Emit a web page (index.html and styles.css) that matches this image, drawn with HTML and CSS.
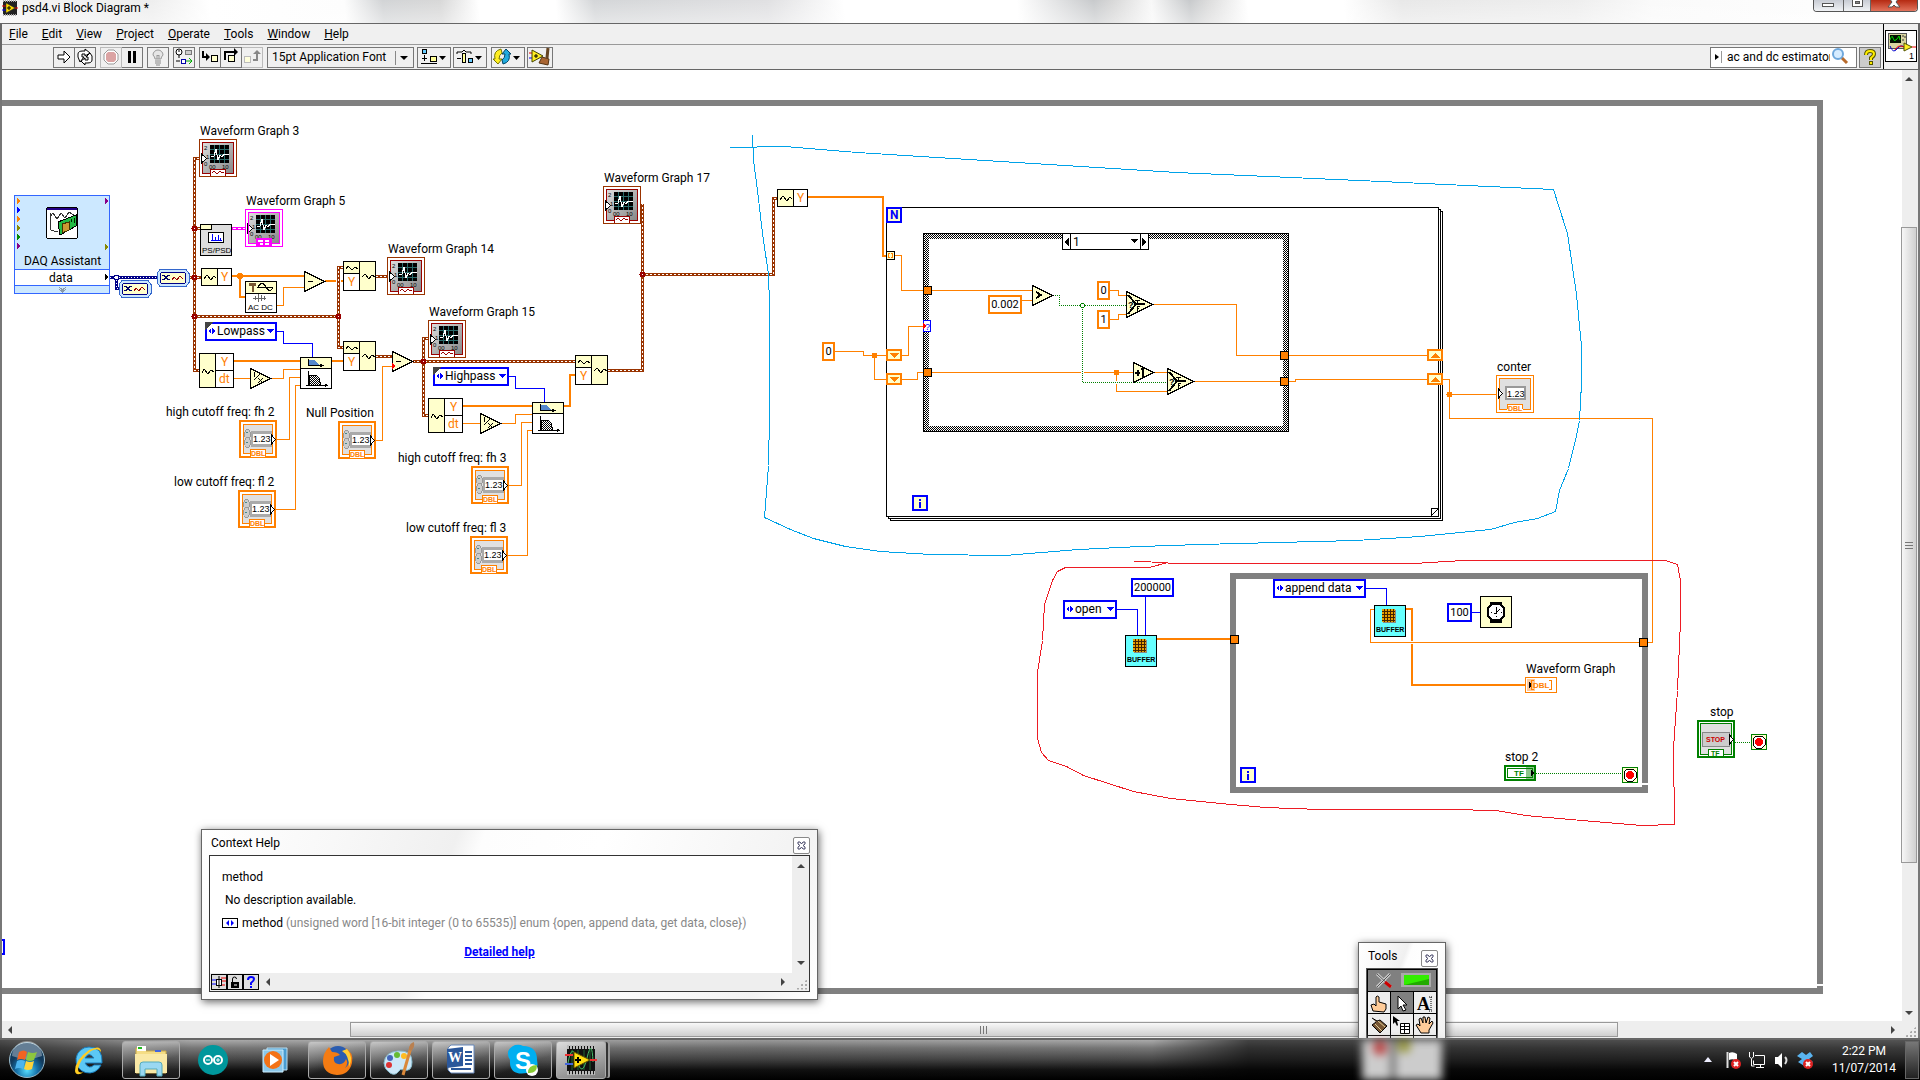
FILE: index.html
```html
<!DOCTYPE html>
<html lang="en">
<head>
<meta charset="utf-8">
<title>psd4.vi Block Diagram *</title>
<link rel="stylesheet" href="styles.css">
</head>
<body>
<div class="window">
  <header class="titlebar">
    <svg class="app-icon" width="16" height="16" viewBox="0 0 16 16"><rect x="1" y="1" width="14" height="14" fill="#222"/><path d="M1 1h14M1 15h14" stroke="#aaa" stroke-width="2" stroke-dasharray="1 1"/><path d="M0 6h4" stroke="#e00"/><path d="M0 10h4" stroke="#00f"/><path d="M4 3l9 5-9 5z" fill="#fd0" stroke="#333" stroke-width=".5"/><path d="M13 8h3" stroke="#e00"/><path d="M5 8h4M7 6v4" stroke="#000"/></svg>
    <span>psd4.vi Block Diagram *</span>
    <div class="caption-buttons">
      <button class="cap" aria-label="Minimize"><svg width="29" height="12"><rect x="8.500" y="3.500" width="11" height="3" fill="#fff" stroke="#555"/></svg></button>
      <button class="cap" aria-label="Restore"><svg width="26" height="12"><rect x="8.500" y="-2.500" width="10" height="9" fill="#fff" stroke="#555"/><rect x="11.500" y="1.500" width="4" height="2" fill="#888" stroke="#555"/></svg></button>
      <button class="cap cap-close" aria-label="Close"><svg width="46" height="12"><path d="M17 7h4l2-2 2 2h4l-4-5 3-4H18l3 4z" fill="#fff" stroke="#555"/></svg></button>
    </div>
  </header>

  <div class="bars">
    <div class="bars-main">
      <nav class="menubar">
        <button><u>F</u>ile</button><button><u>E</u>dit</button><button><u>V</u>iew</button><button><u>P</u>roject</button><button><u>O</u>perate</button><button><u>T</u>ools</button><button><u>W</u>indow</button><button><u>H</u>elp</button>
      </nav>
      <div class="toolbar">
        <div class="group">
          <button class="tb" aria-label="Run"><svg width="20" height="20"><path d="M4 8h6V4l6 6-6 6v-4H4z" fill="#fff" stroke="#000"/></svg></button>
          <button class="tb" aria-label="Run continuously"><svg width="20" height="20" fill="#fff" stroke="#000"><path d="M3 10V7q0-3 5-3h2V2l5 4-5 3V7H7v3h2l-4 5z"/><path d="M17 9v4q0 3-5 3h-2v2l-4-4 4-3v2h3v-3h-2l4-4z"/></svg></button>
        </div>
        <div class="group">
          <button class="tb dim" aria-label="Abort"><svg width="20" height="20"><path d="M7 3h6l4 4v6l-4 4H7l-4-4V7z" fill="#fff" stroke="#999"/><path d="M7 5h6l2 2v6l-2 2H7l-2-2V7z" fill="#dba3a3"/></svg></button>
          <button class="tb" aria-label="Pause"><svg width="20" height="20"><path d="M6 4h3v12H6zM11 4h3v12h-3z"/></svg></button>
        </div>
        <button class="tb" aria-label="Highlight execution"><svg width="20" height="20"><path d="M7 12q0-2-2-4a5 5 0 1 1 10 0q-2 2-2 4z" fill="#e6e6e6" stroke="#999"/><path d="M7 14h6M7 16h6M8 18h4" stroke="#888"/><path d="M9 12V8l1 1 1-1v4" fill="none" stroke="#999"/></svg></button>
        <button class="tb" aria-label="Retain wire values"><svg width="20" height="20"><circle cx="5" cy="5" r="3" fill="#fff" stroke="#000"/><path d="M5 5V3M5 8v3M2 14h4" stroke="#000"/><rect x="11.500" y="3.500" width="6" height="4" fill="#ccc" stroke="#777"/><rect x="7.500" y="12.500" width="4" height="4" fill="#fff" stroke="#00a"/><path d="M12 14h6l-3-3M18 14l-3 3" stroke="#0a0" fill="none"/></svg></button>
        <div class="group">
          <button class="tb" aria-label="Step into"><svg width="20" height="20"><path d="M3 4v6h4" fill="none" stroke="#000" stroke-width="2"/><path d="M6 6l4 4-4 4z"/><rect x="11.500" y="8.500" width="6" height="6" fill="#ffc" stroke="#000"/></svg></button>
          <button class="tb" aria-label="Step over"><svg width="20" height="20"><path d="M4 13V5h9" fill="none" stroke="#000" stroke-width="2"/><path d="M13 1l4 4-4 4z"/><rect x="7.500" y="8.500" width="6" height="6" fill="#ffc" stroke="#000"/></svg></button>
          <button class="tb dim" aria-label="Step out"><svg width="20" height="20"><path d="M11 13h4V6" fill="none" stroke="#888" stroke-width="2"/><path d="M11 7l4-4 4 4z" fill="#888"/><rect x="2.500" y="9.500" width="6" height="6" fill="#ffd" stroke="#bbb"/></svg></button>
        </div>
        <div class="font-box">
          <select aria-label="Font"><option>15pt Application Font</option></select>
          <span class="font-arrow" aria-hidden="true"></span>
        </div>
        <div class="menus">
          <button class="tb drop" aria-label="Align objects"><svg width="32" height="20"><rect x="4.500" y="2.500" width="4" height="4" fill="#6cf" stroke="#000"/><rect x="12.500" y="9.500" width="6" height="5" fill="#ff9" stroke="#000"/><path d="M6.500 8v6M4 11.500h5M3 16.500h16" stroke="#000"/><path d="M21 9h7l-3.500 4z"/></svg></button>
          <button class="tb drop" aria-label="Distribute objects"><svg width="32" height="20"><path d="M3 7V5h5l2-2 2 2h5v2M3 11.500h4" stroke="#000" fill="none"/><rect x="8.500" y="6.500" width="3" height="9" fill="#ff9" stroke="#000"/><rect x="14.500" y="11.500" width="4" height="4" fill="#6cf" stroke="#000"/><path d="M21 9h7l-3.500 4z"/></svg></button>
        </div>
        <button class="tb drop" aria-label="Reorder"><svg width="32" height="20"><path d="M9 2q-8 2-6 10H1l5 5 4-5H7q0-4 3-6z" fill="#fe2" stroke="#770"/><path d="M11 17q8-2 6-10h2l-5-5-4 5h3q0 4-3 6z" fill="#2ad" stroke="#046"/><path d="M21 9h7l-3.500 4z"/></svg></button>
        <button class="tb clean" aria-label="Clean up diagram"><svg width="24" height="20"><path d="M1 6h4" stroke="#e00"/><path d="M1 11h4" stroke="#00f"/><path d="M4 3l11 6-11 6z" fill="#fe2" stroke="#440"/><path d="M6 9h4M8 7v4" stroke="#000"/><path d="M20 1l-1 10" stroke="#642" stroke-width="3"/><path d="M14 10l7 2-1 6-9-2z" fill="#a63" stroke="#531"/></svg></button>
        <label class="search">
          <svg width="14" height="20"><path d="M4 7l4 3-4 3z"/><path d="M10.500 4v12" stroke="#999"/></svg>
          <input value="ac and dc estimator" aria-label="Search">
          <svg width="26" height="20"><path d="M11 10l6 6" stroke="#b86b2c" stroke-width="3"/><circle cx="8" cy="7" r="5" fill="#d6ecff" stroke="#6fa8dc" stroke-width="2"/></svg>
        </label>
        <button class="tb help" aria-label="Context help"><svg width="20" height="20"><path d="M6 8q0-4 4-4t4 3q0 2-3 4v2M11 14v4" fill="none" stroke="#550" stroke-width="4"/><path d="M6 8q0-4 4-4t4 3q0 2-3 4v2M11 15v2" fill="none" stroke="#fe0" stroke-width="2"/></svg></button>
      </div>
    </div>
    <div class="vi-icon">
      <svg width="32" height="32"><rect x=".5" y=".5" width="31" height="31" fill="#fff" stroke="#000"/><rect x="3.500" y="3.500" width="18" height="15" fill="#d8d4a0" stroke="#555"/><rect x="5" y="5" width="11" height="8" fill="#010"/><path d="M5 10q2-6 3-2t3 2 3-4l1 4" fill="none" stroke="#0d0"/><path d="M18 5v2M18 9v2M20 6v2" stroke="#333"/><path d="M5 16q3 8 7 3t7-2" fill="none" stroke="#00c"/><path d="M10 20q3-6 9-3M27 17h4" fill="none" stroke="#e00"/><path d="M19 13l8 4-8 4z" fill="#fe2" stroke="#550"/><text x="24" y="29" class="t9">1</text></svg>
    </div>
  </div>

  <main class="workspace">
    <svg class="diagram" width="1900" height="951" viewBox="2 70 1900 951">
      <defs>
        <pattern id="hatch" width="4" height="4" patternUnits="userSpaceOnUse"><rect width="4" height="4" fill="#fff"/><path d="M0 0h1v1H0zM1 1h1v1H1zM2 0h1v1H2zM3 1h1v1H3zM0 2h1v1H0zM2 2h1v1H2zM1 3h1v1H1zM3 3h1v1H3z"/></pattern>
        <linearGradient id="metal" x1="0" y1="0" x2="1" y2="1"><stop offset="0" stop-color="#ddd"/><stop offset="1" stop-color="#888"/></linearGradient>
        <g id="graph-face">
          <rect x="4" y="4" width="30" height="30" fill="url(#metal)"/>
          <rect x="11" y="6" width="19" height="18" fill="#000"/>
          <path d="M15.500 6v18M20.500 6v18M25.500 6v18M11 10.500h19M11 15.500h19M11 20.500h19" stroke="#2a6a6a"/>
          <path d="M12 17h3l2-7 2 11 2-5 2 2 2-3h5" fill="none" stroke="#fff"/>
          <text x="5" y="11" class="t6">2</text><text x="7" y="20" class="t6">1</text><text x="5" y="27" class="t6">0</text><text x="10" y="30" class="t6">00</text><text x="23" y="30" class="t6">10</text>
          <path d="M2.500 15v9l5-4.500z" fill="#fff" stroke="#000"/>
        </g>
        <g id="graph">
          <rect x=".5" y=".5" width="37" height="37" fill="#fff" stroke="#930"/>
          <use href="#graph-face"/>
          <rect x="3.500" y="3.500" width="31" height="31" fill="none" stroke="#900"/>
          <path d="M11.500 37v-7h15v7" fill="#fff" stroke="#900"/><path d="M13 34l2-2 3 3 3-3 2 2 2-1" fill="none" stroke="#900"/>
          <path d="M2.500 15v9l5-4.500z" fill="#fff" stroke="#000"/>
        </g>
        <g id="control">
          <rect x="1" y="1" width="36" height="36" fill="#fff" stroke="#ff8000" stroke-width="2"/>
          <rect x="4.500" y="4.500" width="29" height="29" fill="#e0e0e0" stroke="#ff8000"/>
          <rect x="12" y="11" width="21" height="16" fill="#aaa"/><ellipse cx="8.500" cy="14.500" rx="3" ry="5" fill="#ccc" stroke="#999"/><ellipse cx="8.500" cy="22.500" rx="3" ry="5" fill="#ccc" stroke="#999"/>
          <path d="M7 13l1-1 1 1M7 22l1 1 1-1" fill="none" stroke="#488"/>
          <rect x="14" y="14" width="18" height="10" fill="#fff"/><text x="14" y="22" class="t9">1.23</text>
          <path d="M32.500 15v9l4-4.500z" fill="#fff" stroke="#000"/>
          <rect x="11.500" y="29.500" width="15" height="8" fill="#fff" stroke="#ff8000"/><text x="12" y="36" class="t7 o b">DBL</text>
        </g>
        <g id="wavey"><rect x=".5" y=".5" width="30" height="17" fill="#fff" stroke="#000"/><rect x="1" y="1" width="15" height="16" fill="#ffc"/><path d="M16.500 0v18" stroke="#000"/><path d="M3 11l3-4 4 5 3-4 2 2" fill="none" stroke="#000"/><text x="20" y="13" class="t12 o">Y</text></g>
        <g id="build"><rect x=".5" y=".5" width="32" height="29" fill="#ffc" stroke="#000"/><rect x="1" y="13" width="15" height="16" fill="#fff"/><path d="M16.500 0v30M0 12.500h16" stroke="#000"/><path d="M3 8l2-3 4 4 3-3 3 2M19 16l3-3 4 5 3-4 3 2" fill="none" stroke="#000"/><text x="5" y="25" class="t12 o">Y</text></g>
        <g id="ydt"><rect x=".5" y=".5" width="34" height="34" fill="#fff" stroke="#000"/><rect x="1" y="1" width="15" height="33" fill="#ffc"/><path d="M16.500 0v35M16 17.500h18" stroke="#000"/><path d="M3 20l2-4 4 5 3-4 3 2" fill="none" stroke="#000"/><text x="22" y="13" class="t12 o">Y</text><text x="20" y="30" class="t12 o">dt</text></g>
        <g id="filter"><rect x=".5" y=".5" width="31" height="31" fill="#fff" stroke="#000"/><rect x="1" y="1" width="30" height="10" fill="#ffc"/><path d="M0 11.500h32M8.500 2v7M8 8.500h14M20 7l3 1.500-3 1.500M8.500 14v15M6 28.500h22M25 27l2 1.500-2 1.500" stroke="#000" fill="none"/><path d="M9 3h5l5 5H9z" fill="#58c"/><path d="M9 18h7l3 3 2 7H9z" fill="url(#hatch)" stroke="#000"/></g>
        <g id="recip"><path d="M.5 .5v20l20-10z" fill="#ffc" stroke="#000"/><path d="M4 12L10 6M4.500 4v5M8 10l5 5M13 10l-5 5" stroke="#000" fill="none"/></g>
        <g id="minus"><path d="M.5 .5v20l20-10z" fill="#ffc" stroke="#000"/><path d="M4 10.500h5" stroke="#000"/></g>
        <g id="select"><path d="M.5 .5v26l26-13z" fill="#ffc" stroke="#000"/><path d="M2 4l8 9-8 10M10 13h9" fill="none" stroke="#000" stroke-width="2"/><path d="M9 9.500h5M11.500 9v3M11.500 15v5M11 15.500h3M11 17.500h2" stroke="#000"/><text x="2" y="17" class="t9 b">?</text></g>
        <g id="buffer"><rect x=".5" y=".5" width="31" height="31" fill="#6ff" stroke="#000"/><rect x="9" y="5" width="13" height="13" fill="#888"/><rect x="8" y="4" width="13" height="13" fill="#e8a000"/><path d="M8 6.500h13M8 9.500h13M8 12.500h13M8 15.500h13M10.500 4v13M13.500 4v13M16.500 4v13M19.500 4v13" stroke="#420"/><text x="2" y="27" class="t7 b">BUFFER</text></g>
        <g id="tunnel"><rect x=".5" y=".5" width="8" height="8" fill="#ff8000" stroke="#000"/></g>
        <g id="shift"><rect x="1" y="1" width="14" height="10" fill="#ffc" stroke="#ff8000" stroke-width="2"/></g>
        <g id="iter"><rect x="1" y="1" width="14" height="14" fill="#ffc" stroke="#00f" stroke-width="2"/><path d="M7 4h2v2H7zM7 7h2v6H7z" fill="#00f"/></g>
        <g id="stopterm"><rect x=".5" y=".5" width="15" height="15" fill="#ffc" stroke="#008000"/><path d="M5 2h6l3 3v6l-3 3H5l-3-3V5z" fill="#fff" stroke="#000"/><circle cx="8" cy="8" r="4" fill="#f00"/></g>
        <g id="convert"><path d="M3 .5h26l3 4v9l-3 4H3l-3-4v-9z" fill="#cce8ff" stroke="#36c"/><rect x="3.500" y="3.500" width="25" height="11" rx="2" fill="#ffc" stroke="#008"/><path d="M5 6.500h2l4 4h2M5 10.500h2l4-4h2" fill="none" stroke="#006"/><path d="M15 11l2-3 3 3 3-4 3 3" fill="none" stroke="#900"/></g>
        <g id="enumglyph"><path d="M0 4l3-3v6zM4 1l3 3-3 3z" fill="#00f"/></g>
        <g id="caret"><path d="M0 0h7L3.500 4z" fill="#00f"/></g>
      </defs>

      <!-- outer while loop -->
      <path class="loop" d="M2 103H1820V984M1817 991H2"/><path d="M1817 986h6v8h-6z" fill="#808080"/>
      <path d="M0 940h4v14H0" fill="none" stroke="#00f" stroke-width="2"/>

      <!-- inner while loop -->
      <path class="loop" d="M1645 783V576H1233V790H1648"/><path d="M1642 785h6v3h-6z" fill="#808080"/>

      <!-- for loop -->
      <g fill="#fff" stroke="#000"><rect x="890.500" y="211.500" width="552" height="309"/><rect x="888.500" y="209.500" width="552" height="309"/><rect x="886.500" y="207.500" width="552" height="309"/><path d="M1431.500 516v-7.500h7M1431 516l8-8" fill="none"/></g>
      <path fill-rule="evenodd" d="M923 233h366v199h-366zM929 239v187h354v-187z" fill="url(#hatch)"/><rect x="923.500" y="233.500" width="365" height="198" fill="none" stroke="#000"/>

      <!-- waveform wires -->
      <path class="wf" d="M199 158.500H194.500V370.500H199M189 277.500H201M194 228.500H200M194 316.500H338.500M343 267.500H338.500V347.500H343M376 276.500H388M376 356.500H392M413 361.500H575M428 338.500H423.500V415.500H429M608 370.500H642.500V204M642 274.500H773.500V198.500H777"/>
      <path class="wf-core" d="M199 158.500H194.500V370.500H199M189 277.500H201M194 228.500H200M194 316.500H338.500M343 267.500H338.500V347.500H343M376 276.500H388M376 356.500H392M413 361.500H575M428 338.500H423.500V415.500H429M608 370.500H642.500V204M642 274.500H773.500V198.500H777"/>
      <g fill="#fff" stroke="#900" stroke-width="2"><circle cx="194.500" cy="228.500" r="2"/><circle cx="194.500" cy="277.500" r="2"/><circle cx="194.500" cy="316.500" r="2"/><circle cx="338.500" cy="316.500" r="2"/><circle cx="423.500" cy="361.500" r="2"/><circle cx="642.500" cy="274.500" r="2"/></g>
      <path d="M110 277.500H158M116.500 277V288.500H120" fill="none" stroke="#008" stroke-width="3"/><path d="M110 277.500H158M116.500 277V288.500H120" fill="none" stroke="#fff" stroke-dasharray="1 2"/><circle cx="116.500" cy="277.500" r="2.500" fill="#fff" stroke="#008"/>
      <path d="M232 228.500h14" stroke="#f0f" stroke-width="3"/><path d="M233 228.500h12" stroke="#fff" stroke-dasharray="3 2"/>

      <!-- numeric wires -->
      <path class="num2" d="M232 276H304M240 276V297H245M325 281H336M341 281H343M234 361H300M332 361H343M463 406H532M564 406H570V375H575M808 197H883V256H887M1157 639H1231M1406 609H1412V641M1412 644V685H1526"/>
      <path class="num" d="M277 305.500H283.500V287.500H304M234 378.500H250M271 378.500H283.500V369.500H300M277 439.500H289.500V377.500H300M276 509.500H295.500V385.500H300M376 440.500H382.500V366.500H392M463 423.500H480M501 423.500H515.500V414.500H532M509 485.500H521.500V422.500H532M508 555.500H527.500V430.500H532M835 351.500H863.500V355.500H886M874.500 355V379.500H886M895 255.500H901.500V290.500H924M902 355.500H908.500V326.500H924M902 379.500H917.500V372.500H924M932 290.500H1032M1022 300.500H1032M1110 290.500H1118.500V295.500H1126M1110 319.500H1118.500V314.500H1126M1153 304.500H1236.500V355.500H1427M932 372.500H1081M1084 372.500H1133M1154 372.500H1167M1116.500 372V381M1116.500 384V391.500H1167M1194 381.500H1295.500V379.500H1427M1443 379.500H1449.500V418.500H1652.500V642.500H1647M1449 394.500H1496M1374 609.500H1370.500V642.500H1640"/>
      <g fill="#ff8000"><circle cx="240" cy="276" r="3"/><circle cx="874.500" cy="355.500" r="3"/><circle cx="1116.500" cy="372.500" r="3"/><circle cx="1449.500" cy="394.500" r="3"/></g>

      <!-- integer wires -->
      <path class="int" d="M277 331.500H283.500V343.500H312.500V357M509 376.500H515.500V388.500H544.500V402M1117 609.500H1137.500V635M1145.500 597V635M1366 588.500H1386.500V605M1472 612.500H1480"/>

      <!-- boolean wires -->
      <path class="bool" d="M1053 295.500H1059.500V305.500H1126M1082.500 305V382.500H1167M1536 773.500H1622M1735 742.500H1751"/><circle cx="1082.500" cy="305.500" r="2" fill="#fff" stroke="#008000"/>

      <!-- DAQ Assistant -->
      <rect x="14.500" y="195.500" width="95" height="98" fill="#cce8ff" stroke="#36f"/><rect x="15" y="270" width="94" height="15" fill="#fff"/><path d="M14 269.500h96M14 285.500h96" stroke="#36f"/>
      <path d="M17 198l3 3-3 3zM17 216l3 3-3 3z" fill="#ff8000"/><path d="M17 207l3 3-3 3z" fill="#00f"/><path d="M17 225l3 3-3 3zM105 244l3 3-3 3z" fill="#880"/><path d="M17 234l3 3-3 3z" fill="#080"/><path d="M17 243l3 3-3 3zM105 198l3 3-3 3z" fill="#808"/><path d="M105 274l4 3-4 3z"/>
      <path d="M59 287l3.500 3 3.500-3M59 289l3.500 3 3.500-3" fill="none" stroke="#89a"/>
      <rect x="46.500" y="207.500" width="31" height="31" rx="2" fill="#fff" stroke="#000"/><rect x="47" y="208" width="30" height="2" fill="#208"/><path d="M50 213v14q0 4 4 4h4M50 217l3-4 4 6 4-6 4 5 4-6 6 4" fill="none" stroke="#333"/><path d="M58 222l18-7v11l-16 9z" fill="#2b4" stroke="#000"/><path d="M62 224l7-2v8l-7 3z" fill="#c93" stroke="#430"/><path d="M71 219v3M74 218v5" stroke="#020"/>
      <use href="#convert" x="157" y="269"/><use href="#convert" x="119" y="280"/>

      <use href="#graph" x="199" y="139"/><use href="#graph" x="387" y="257"/><use href="#graph" x="428" y="320"/><use href="#graph" x="603" y="186"/>
      <rect x="245.500" y="209.500" width="37" height="37" fill="#fff" stroke="#f0f"/><use href="#graph-face" x="245" y="209"/><rect x="248.500" y="212.500" width="31" height="31" fill="none" stroke="#f0f"/><rect x="256" y="238" width="16" height="8" fill="#f0f"/><path d="M258 240h5v2h-5zM265 240h4v2h-4zM260 243h3v2h-3zM265 243h4v2h-4z" fill="#fff"/>

      <rect x="200.500" y="224.500" width="31" height="31" fill="#ddd" stroke="#000"/><rect x="200.500" y="224.500" width="11" height="5" fill="#ffc" stroke="#000"/><rect x="208.500" y="232.500" width="15" height="10" fill="#fff" stroke="#000"/><path d="M211 240.500h11M212.500 234v7M215.500 237v4M218.500 235v6M220.500 238v3" stroke="#00f"/><text x="202" y="253" class="t8">PS/PSD</text>
      <use href="#wavey" x="201" y="268"/><use href="#wavey" x="777" y="189"/>
      <rect x="245.500" y="281.500" width="31" height="31" fill="#fff" stroke="#000"/><rect x="246" y="282" width="30" height="11" fill="#ffc"/><path d="M245 293.500h32M258 287q4-7 8 0t7 0z" fill="none" stroke="#000"/><path d="M249 283h7v3h-2v6h-2v-6h-3z" fill="#753"/><path d="M253 298h13M255 296v4M258 294v8M261 295v6M264 296v4" stroke="#666"/><text x="248" y="310" class="t8">AC DC</text>
      <use href="#minus" x="304" y="271"/><use href="#minus" x="392" y="351"/><path d="M392 363l3 3-3 3z" fill="#f00"/>
      <use href="#build" x="343" y="261"/><use href="#build" x="343" y="341"/><use href="#build" x="575" y="355"/>
      <use href="#ydt" x="199" y="353"/><use href="#ydt" x="428" y="398"/><use href="#recip" x="250" y="368"/><use href="#recip" x="480" y="413"/><use href="#filter" x="300" y="357"/><use href="#filter" x="532" y="402"/>
      <use href="#control" x="239" y="420"/><use href="#control" x="238" y="490"/><use href="#control" x="338" y="421"/><use href="#control" x="471" y="466"/><use href="#control" x="470" y="536"/>

      <!-- for loop terminals -->
      <rect x="887" y="208" width="14" height="14" fill="#ffc" stroke="#00f" stroke-width="2"/><text x="890" y="219" class="t12 blue b">N</text>
      <rect x="886.500" y="251.500" width="8" height="8" fill="#ffc" stroke="#000"/><path d="M890 253.500h-1.500v4h1.500M891 253.500h1.500v4H891" fill="none" stroke="#ff8000"/>
      <use href="#shift" x="886" y="349"/><use href="#shift" x="886" y="373"/><use href="#shift" x="1427" y="349"/><use href="#shift" x="1427" y="373"/>
      <path d="M889 353h10l-5 5zM889 377h10l-5 5zM1430 358h10l-5-5zM1430 382h10l-5-5z" fill="#ff8000"/>
      <use href="#iter" x="912" y="495"/><use href="#iter" x="1240" y="767"/>
      <use href="#tunnel" x="923" y="286"/><use href="#tunnel" x="923" y="368"/><use href="#tunnel" x="1280" y="351"/><use href="#tunnel" x="1280" y="377"/><use href="#tunnel" x="1230" y="635"/><use href="#tunnel" x="1639" y="638"/>
      <rect x="923.500" y="320.500" width="7" height="11" fill="#fff" stroke="#00f"/><text x="925" y="330" class="t9 blue">?</text><path d="M923 323l3 3-3 3z" fill="#f00"/>
      <rect x="1062.500" y="233.500" width="86" height="16" fill="#fff" stroke="#000"/><path d="M1070.500 233v17M1140.500 233v17" stroke="#000"/><path d="M1069 238v8l-5-4zM1142 238v8l5-4zM1131 239h7l-3.500 4z"/><text x="1073" y="246" class="t12">1</text>
      <path d="M1032.500 285.500v20l20-10z" fill="#ffc" stroke="#000"/><path d="M1036 292l5 3-5 3" fill="none" stroke="#000" stroke-width="2"/>
      <use href="#select" x="1126" y="291"/><use href="#select" x="1167" y="368"/>
      <path d="M1133.500 362.500v20l20-10z" fill="#ffc" stroke="#000"/><path d="M1135 373h5M1138 370v6M1143 368v9M1141 369h2" stroke="#000" stroke-width="2"/>

      <!-- indicators and sub-VIs -->
      <rect x="1496.500" y="375.500" width="37" height="37" fill="#fff" stroke="#ff8000"/><rect x="1499.500" y="378.500" width="31" height="31" fill="#e0e0e0" stroke="#ff8000"/><rect x="1505" y="386" width="21" height="14" fill="#999"/><rect x="1507" y="388" width="17" height="10" fill="#fff"/><text x="1507" y="397" class="t9">1.23</text><path d="M1498.500 389v9l4-4.500z" fill="#fff" stroke="#000"/><rect x="1507" y="404" width="16" height="8" fill="#fff"/><path d="M1507.500 409v-4.500h15v4.500" fill="none" stroke="#ff8000"/><text x="1508" y="411" class="t7 o b">DBL</text>
      <use href="#buffer" x="1125" y="635"/><use href="#buffer" x="1374" y="605"/>
      <rect x="1480.500" y="596.500" width="31" height="31" fill="#ffc" stroke="#000"/><path d="M1490 602h12v21h-12z"/><path d="M1492 604h8l4 4v8l-4 4h-8l-4-4v-8z" fill="#fff" stroke="#000" stroke-width="2"/><path d="M1496 607v6h-2M1496 613l4-4M1491 612h1M1501 612h1M1496 616v1" stroke="#000" fill="none"/>
      <rect x="1525.500" y="677.500" width="31" height="15" fill="#fff" stroke="#ff8000"/><rect x="1527" y="679" width="8" height="12" fill="#fdc89a"/><path d="M1529 682l4 3-4 3z"/><path d="M1534 680.500h-2.500v9h2.500M1549 680.500h2.500v9h-2.500" fill="none" stroke="#ff8000"/><text x="1533" y="688" class="t8 o b">DBL</text>
      <rect x="1505" y="766" width="30" height="14" fill="#fff" stroke="#008000" stroke-width="2"/><rect x="1507.500" y="768.500" width="25" height="9" fill="#fff" stroke="#008000"/><text x="1514" y="776" class="t8 g b">TF</text><rect x="1526" y="766" width="9" height="14" fill="#008000" opacity=".45"/><path d="M1531 770l4 3-4 3z"/>
      <use href="#stopterm" x="1622" y="767"/><use href="#stopterm" x="1751" y="734"/>
      <rect x="1698" y="721" width="36" height="36" fill="#fff" stroke="#008000" stroke-width="2"/><rect x="1700.500" y="723.500" width="31" height="31" fill="#e0e0e0" stroke="#008000"/><rect x="1702.500" y="732.500" width="27" height="14" fill="#ccc" stroke="#888"/><text x="1706" y="742" class="t7 red b">STOP</text><path d="M1729.500 735v9l4-4.500z" fill="#fff" stroke="#000"/><rect x="1708.500" y="749.500" width="15" height="7" fill="#fff" stroke="#008000"/><text x="1711" y="756" class="t7 g b">TF</text>

      <!-- labels -->
      <g class="label">
        <text x="200" y="135">Waveform Graph 3</text><text x="246" y="205">Waveform Graph 5</text><text x="388" y="253">Waveform Graph 14</text><text x="429" y="316">Waveform Graph 15</text><text x="604" y="182">Waveform Graph 17</text>
        <text x="24" y="265">DAQ Assistant</text><text x="49" y="282">data</text>
        <text x="166" y="416">high cutoff freq: fh 2</text><text x="174" y="486">low cutoff freq: fl 2</text><text x="306" y="417">Null Position</text><text x="398" y="462">high cutoff freq: fh 3</text><text x="406" y="532">low cutoff freq: fl 3</text>
        <text x="1497" y="371">conter</text><text x="1526" y="673">Waveform Graph</text><text x="1505" y="761">stop 2</text><text x="1710" y="716">stop</text>
      </g>

      <!-- constants -->
      <foreignObject x="205" y="322" width="72" height="19"><select class="enum" aria-label="Lowpass filter type"><option>Lowpass</option></select></foreignObject>
      <foreignObject x="433" y="367" width="76" height="19"><select class="enum" aria-label="Highpass filter type"><option>Highpass</option></select></foreignObject>
      <foreignObject x="1063" y="600" width="54" height="19"><select class="enum" aria-label="First buffer method"><option>open</option></select></foreignObject>
      <foreignObject x="1273" y="579" width="93" height="19"><select class="enum" aria-label="Second buffer method"><option>append data</option></select></foreignObject>
      <foreignObject x="988" y="295" width="34" height="19"><input class="const" value="0.002" aria-label="Threshold"></foreignObject>
      <foreignObject x="822" y="342" width="13" height="19"><input class="const" value="0" aria-label="Initial value"></foreignObject>
      <foreignObject x="1097" y="281" width="13" height="19"><input class="const" value="0" aria-label="True value"></foreignObject>
      <foreignObject x="1097" y="310" width="13" height="19"><input class="const" value="1" aria-label="False value"></foreignObject>
      <foreignObject x="1131" y="578" width="43" height="19"><input class="const const-int" value="200000" aria-label="Buffer size"></foreignObject>
      <foreignObject x="1447" y="603" width="25" height="19"><input class="const const-int" value="100" aria-label="Wait milliseconds"></foreignObject>
      <g class="passive"><use href="#enumglyph" x="208" y="327"/><use href="#enumglyph" x="436" y="372"/><use href="#enumglyph" x="1066" y="605"/><use href="#enumglyph" x="1276" y="584"/><use href="#caret" x="267" y="329"/><use href="#caret" x="499" y="374"/><use href="#caret" x="1107" y="607"/><use href="#caret" x="1356" y="586"/><path d="M205 322h8l-8 8zM433 367h8l-8 8z" fill="#444"/></g>

      <!-- freehand marks -->
      <path class="ink blue-ink" d="M730.500 147.500L784.500 146.500 857.500 152.500 1016.500 162.500 1176.500 172.500 1359.500 180.500 1445.500 184.500 1553.500 189.500 1558.500 205.500 1567.500 233.500 1576.500 294.500 1581.500 346.500 1581.500 383.500 1579.500 420.500 1575.500 440.500 1568.500 468.500 1559.500 490.500 1555.500 511.500 1537.500 518.500 1514.500 522.500 1490.500 529.500 1460.500 532.500 1420.500 536.500 1355.500 540.500 1200.500 544.500 1140.500 546.500 1078.500 549.500 1004.500 555.500 931.500 554.500 880.500 551.500 845.500 546.500 813.500 538.500 790.500 529.500 764.500 517.500 768.500 465.500 769.500 416.500 769.500 305.500 768.500 274.500 762.500 233.500 757.500 190.500 753.500 160.500 752.500 135.500"/>
      <path class="ink red-ink" d="M1134.500 561.500L1167.500 562.500 1149.500 567.500H1065.500L1057.500 571.500 1052.500 580.500 1044.500 604.500 1042.500 640.500 1037.500 672.500V738.500L1041.500 752.500 1048.500 760.500 1066.500 766.500 1083.500 775.500 1133.500 791.500 1170.500 798.500 1220.500 803.500 1265.500 807.500 1320.500 809.500 1449.500 809.500 1495.500 810.500 1525.500 815.500 1570.500 819.500 1641.500 825.500 1674.500 824.500 1673.500 748.500 1677.500 690.500 1680.500 620.500V580.500L1677.500 564.500 1665.500 560.500H1463.500L1413.500 563.500H1167.500"/>
    </svg>

    <div class="vscroll"><span class="up"></span><span class="vthumb"></span><span class="down"></span></div>
  </main>

  <div class="hscroll"><span class="left"></span><span class="track-a"></span><span class="hthumb"></span><span class="track-b"></span><span class="right"></span><span class="corner grip"></span></div>

  <section class="float help-window">
    <header><span>Context Help</span><button class="x" aria-label="Close help"><svg width="9" height="9"><path d="M1 1h2l1.500 2L6 1h2v2L6 4.500 8 6v2H6L4.500 6 3 8H1V6l2-1.500L1 3z" fill="#fff" stroke="#446"/></svg></button></header>
    <div class="help-body">
      <div class="help-view">
        <div class="help-text">
          <p>method</p>
          <p class="indent">No description available.</p>
          <p><svg width="16" height="10"><rect x=".5" y=".5" width="15" height="9" fill="#fff" stroke="#000"/><path d="M4 5l3-3v6zM9 2l3 3-3 3z" fill="#00f"/></svg> method <span class="muted">(unsigned word [16-bit integer (0 to 65535)] enum {open, append data, get data, close})</span></p>
          <p class="center"><a href="#help">Detailed help</a></p>
        </div>
        <div class="mini-v"><span class="up"></span><span class="down"></span></div>
      </div>
      <div class="help-foot">
        <button aria-label="Optional terminals"><svg width="14" height="14"><path d="M0 5h5M0 9h5" stroke="#00f"/><path d="M9 3h5M9 6h5M9 10h4" stroke="#e00"/><rect x="4.500" y="4.500" width="5" height="6" fill="#fff" stroke="#000"/><path d="M7 1v12" stroke="#000"/></svg></button><button aria-label="Lock help"><svg width="14" height="14"><rect x="3" y="7" width="8" height="6"/><path d="M4.500 7V4q0-2 2-2t2 2" fill="none" stroke="#000"/><path d="M6 10h3" stroke="#fff"/></svg></button><button aria-label="More help"><svg width="14" height="14"><path d="M4 5q0-3 3-3t3 2q0 2-3 4v2M7 11v2" fill="none" stroke="#00f" stroke-width="2"/></svg></button>
        <span class="left"></span><span class="spring"></span><span class="right"></span><span class="grip"></span>
      </div>
    </div>
  </section>

  <section class="float tools-window">
    <header><span>Tools</span><button class="x" aria-label="Close tools"><svg width="9" height="9"><path d="M1 1h2l1.500 2L6 1h2v2L6 4.500 8 6v2H6L4.500 6 3 8H1V6l2-1.500L1 3z" fill="#fff" stroke="#446"/></svg></button></header>
    <div class="palette">
      <button class="auto" aria-label="Automatic tool selection"><svg width="70" height="21"><path d="M9 4l14 13M22 4L9 17" stroke="#ccc" stroke-width="3"/><path d="M9 4l14 13M22 4L9 17" stroke="#555"/><path d="M17 12l6 5" stroke="#c00" stroke-width="3"/><rect x="33" y="3" width="30" height="14" fill="#aaa"/><rect x="36" y="5" width="25" height="10" fill="#3e0"/><path d="M36 15h25V9z" fill="#2a0"/></svg></button>
      <button aria-label="Operate"><svg width="22" height="20"><path d="M5 18L3 12l3-1 2 2V4q1-2 3 0v5l7 2v5l-2 3z" fill="#fc9" stroke="#000"/></svg></button>
      <button class="on" aria-label="Position"><svg width="22" height="20"><path d="M7 3v13l3-3 2 5 3-1-3-5h4z" fill="#fff" stroke="#000"/></svg></button>
      <button aria-label="Edit text"><svg width="22" height="20"><text x="3" y="17" class="serif">A</text><path d="M15 4h4M17 4v14M15 18h4" stroke="#000" stroke-dasharray="1 1"/></svg></button>
      <button aria-label="Connect wire"><svg width="22" height="20"><path d="M4 3l5 3 3-1 7 6-7 7-8-8 4-3" fill="#753" stroke="#000"/><path d="M7 9l7 7M10 6l7 6" stroke="#dc9"/></svg></button>
      <button aria-label="Shortcut menu"><svg width="22" height="20"><path d="M2 1v8l2-2 2 4 1-1-1-4h3z"/><path d="M9.500 8.500h9v10h-9zM9 11.500h10M9 14.500h10M13.500 8v10" fill="#fff" stroke="#000"/></svg></button>
      <button aria-label="Scroll"><svg width="22" height="20"><path d="M7 18l-5-8 2-1 2 2-1-7 2-1 2 5V2h2l1 6 2-6 2 1-1 6 3-3 1 2-4 7v3z" fill="#fc9" stroke="#000"/></svg></button>
      <button aria-label="Breakpoint"><svg width="22" height="20"><circle cx="11" cy="10" r="7" fill="#d22"/></svg></button>
      <button aria-label="Probe"><svg width="22" height="20"><circle cx="11" cy="11" r="7" fill="#bb0"/></svg></button>
      <button aria-label="Pick color"><svg width="22" height="20"><path d="M5 17L17 3" stroke="#c22" stroke-width="4"/></svg></button>
    </div>
  </section>
</div>

<footer class="taskbar">
  <span class="reflection"></span>
  <button class="task plain start" aria-label="Start"><svg width="38" height="38"><defs><radialGradient id="orb" cy=".8"><stop offset="0" stop-color="#5df"/><stop offset=".6" stop-color="#1570a8"/><stop offset="1" stop-color="#123a5c"/></radialGradient></defs><circle cx="19" cy="19" r="17.500" fill="url(#orb)" stroke="#9bc"/><path d="M4 15a15 15 0 0 1 30 0q-15 6-30 0" fill="#fff" opacity=".35"/><path d="M11 11q5-3 8 0l-2 8q-4-2-8 0z" fill="#f26322"/><path d="M20 11q5 2 9 0l-3 8q-4 2-8 0z" fill="#8dc63f"/><path d="M9 20q4-2 8 0l-2 8q-4-2-8 0z" fill="#4cb4ee"/><path d="M18 20q4 2 8 0l-2 8q-4 2-8 0z" fill="#fdd23a"/></svg></button>
  <button class="task plain" aria-label="Internet Explorer"><svg width="34" height="34"><path d="M17 4a13 13 0 1 0 12 18h-7q-5 5-9-2h17Q31 4 17 4zm-4 11q4-7 9 0z" fill="#5cc8f5" stroke="#1a7fc0"/><path d="M29 9Q29 1 17 7 3 17 3 28q1 6 9 1-6 2-6-3Q8 16 19 8q7-4 10 1z" fill="#fc2"/></svg></button>
  <button class="task open" aria-label="File Explorer"><svg width="36" height="34"><path d="M3 5h8l2 3h20v22H3z" fill="#f5dd85" stroke="#c9a94a"/><rect x="4" y="3" width="9" height="5" fill="#fff"/><path d="M5 4h4v2H5z" fill="#2b2"/><path d="M22 7h6v2h-6z" fill="#46d"/><path d="M2 11h32v19H2z" fill="#fae9a6"/><path d="M7 33V22q0-3 3-3h16q3 0 3 3v11h-5v-7H12v7z" fill="#9ad8f2" stroke="#5ab"/></svg></button>
  <button class="task plain" aria-label="Arduino"><svg width="34" height="34"><ellipse cx="17" cy="17" rx="15" ry="15" fill="#00979c"/><circle cx="12" cy="17" r="4" fill="none" stroke="#fff" stroke-width="2"/><circle cx="22" cy="17" r="4" fill="none" stroke="#fff" stroke-width="2"/><path d="M10 17h4M20 17h4M22 15v4" stroke="#fff"/></svg></button>
  <button class="task plain" aria-label="Media Player"><svg width="30" height="30"><path d="M7 3h20v22H7z" fill="#4a9cd0" stroke="#bde"/><path d="M3 5h20v22H3z" fill="#8cc8ea" stroke="#cef"/><circle cx="13" cy="15" r="9" fill="#f47216"/><path d="M10 9l9 6-9 6z" fill="#fff"/></svg></button>
  <button class="task open" aria-label="Firefox"><svg width="34" height="34"><circle cx="18" cy="16" r="13" fill="#2a5cb0"/><path d="M9 4l3 5q6 0 8 3l-6 2q-1 6 4 7 6 1 8-5 3 4-1 9 6-4 4-13-1-4-4-7 9 4 7 15-3 12-15 12Q3 31 3 18q0-8 6-14z" fill="#f57c13"/><path d="M27 6q7 8 2 18 0-12-7-16z" fill="#fc3"/></svg></button>
  <button class="task open" aria-label="Paint"><svg width="36" height="36"><path d="M17 9q14-1 14 11 0 10-8 8-4-2-6 2-3 4-8 1-6-4-6-10Q4 10 17 9z" fill="#cde8f8" stroke="#8bc"/><circle cx="9" cy="16" r="3" fill="#46b"/><circle cx="16" cy="13" r="3" fill="#6b3"/><circle cx="8" cy="23" r="3" fill="#d33"/><circle cx="23" cy="14" r="3" fill="#fb2"/><path d="M30 5l-8 28" stroke="#d9883a" stroke-width="3"/><path d="M28 8q0-7 5-8 1 6-3 9z" fill="#b98050"/></svg></button>
  <button class="task open" aria-label="Word"><svg width="34" height="34"><path d="M4 5l3-3h23v28H7l-3-3z" fill="#fff" stroke="#68b"/><path d="M3 6l16-2v19l-16 2z" fill="#2b579a"/><path d="M21 9h7M21 13h7M21 17h7M7 26h20M21 21h7" stroke="#2b579a" stroke-width="2"/><text x="4" y="19" class="word">W</text></svg></button>
  <button class="task open" aria-label="Skype"><svg width="36" height="36"><path d="M10 3q5-1 8 1 14 0 14 14 3 14-10 13Q4 34 5 18-1 8 10 3z" fill="#00aff0"/><text x="10" y="27" class="skype">S</text><circle cx="27" cy="28" r="6" fill="#fff"/><path d="M23 31q0-8 9-8 0 9-9 8z" fill="#8c3"/></svg></button>
  <button class="task open active" aria-label="LabVIEW"><svg width="34" height="34"><rect x="3" y="3" width="28" height="28" fill="#111"/><path d="M3 4h28M3 30h28" stroke="#bbb" stroke-width="4" stroke-dasharray="2 1"/><path d="M8 7v20M14 7v20M20 7v20M26 7v20" stroke="#263"/><path d="M4 20q4-22 9-3t10-2 6 4" fill="none" stroke="#4b6"/><path d="M1 12h8M26 17h7" stroke="#e33" stroke-width="2"/><path d="M1 21h8" stroke="#46d" stroke-width="2"/><path d="M10 9l16 8-16 8z" fill="#fd1" stroke="#650"/><path d="M11 17h6M14 14v6" stroke="#000" stroke-width="2"/></svg></button>
  <div class="tray">
    <svg width="112" height="24"><path d="M1 14l4-5 4 5z" fill="#eef"/><path d="M24.500 4v16" stroke="#ddd" stroke-width="2"/><path d="M26 5q4-2 8 1v7q-4-3-8-1z" fill="#fff"/><circle cx="33" cy="16" r="5" fill="#d22"/><path d="M31 14l4 4M35 14l-4 4" stroke="#fff" stroke-width="2"/><path d="M52 7.500h9.500v9H50.500v-4M53 19.500h8M57.500 17v2M46.500 4v5q2 3 4 0V4M48.500 11v7h3" fill="none" stroke="#fff"/><path d="M72 9h3l4-4v15l-4-4h-3z" fill="#fff"/><path d="M82 9q3 3 0 7" fill="none" stroke="#ddd" stroke-width="2"/><path d="M94 8l5-4 4 3 4-3 3 4-4 3 4 3-7 5-8-5 4-3z" fill="#5ab4f0"/><circle cx="105" cy="16" r="5" fill="#d22"/><path d="M103 14l4 4M107 14l-4 4" stroke="#fff" stroke-width="2"/></svg>
    <div class="clock"><span>2:22 PM</span><span>11/07/2014</span></div>
    <button class="show-desktop" aria-label="Show desktop"></button>
  </div>
</footer>
</body>
</html>
```

FILE: styles.css
```css
* { box-sizing: border-box; }
body {
  margin: 0;
  height: 100vh;
  display: flex;
  flex-direction: column;
  overflow: hidden;
  font: 12px/16px Roboto, "Open Sans", sans-serif;
  color: #000;
  background: #fff;
}
button, select, input { font: inherit; color: inherit; padding: 0; margin: 0; border: 0; background: none; border-radius: 0; }
svg { display: block; flex: none; }
select { appearance: none; }

.window { flex: 1; min-height: 0; display: flex; flex-direction: column; border-bottom: 2px solid #666; position: relative; overflow: hidden; }

/* title bar */
.titlebar {
  height: 23px;
  flex: none;
  display: flex;
  align-items: flex-start;
  gap: 4px;
  padding-left: 2px;
  background: linear-gradient(rgba(255,255,255,0), rgba(255,255,255,.4)), linear-gradient(85deg, #f4f4f4 0, #eee 8%, #fff 11%, #fdfdfd 18%, #d2d4d6 20%, #d8d8d8 23%, #fff 25%, #fff 29%, #d4d6d8 31%, #e0e0e2 40%, #fff 44%, #fff 53%, #c8cacc 57%, #d8d8d8 58%, #f8f8f8 60%, #c8cacc 62%, #ddd 63%, #fff 65%, #fff 70%, #e8e8e8 73%, #eee 82%, #fafafa 86%, #fff 100%);
}
.caption-buttons { margin-left: auto; display: flex; height: 12px; margin-right: 2px; border: 1px solid #555; border-top: 0; border-radius: 0 0 4px 4px; overflow: hidden; }
.cap { background: linear-gradient(#c8ccd4, #f0f2f5); border-right: 1px solid #666; }
.cap-close { background: linear-gradient(#b52a12, #e2735c); border: 0; }

/* menu and tool bars */
.bars { flex: none; display: flex; background: #f0f0f0; border: 1px solid #666; border-width: 1px 2px 1px 2px; height: 47px; }
.bars-main { flex: 1; min-width: 0; }
.menubar { height: 21px; display: flex; align-items: center; gap: 14px; padding-left: 7px; border-bottom: 1px solid #999; }
.toolbar { height: 24px; display: flex; align-items: center; gap: 4px; padding: 0 2px 0 51px; }
.group, .menus { display: flex; }
.menus { gap: 2px; margin-left: -1px; }
.tb { height: 21px; width: 22px; border: 1px solid #777; display: flex; align-items: center; justify-content: center; }
.group .tb + .tb { border-left: 0; width: 21px; }
.dim { border-color: #bbb; }
.drop { width: 34px; }
.clean { width: 26px; margin-left: -2px; }
.help { background: #ccc; }
.font-box { display: flex; align-items: center; width: 147px; height: 21px; border: 1px solid #777; position: relative; }
.font-box select { width: 100%; padding-left: 4px; }
.font-arrow { position: absolute; right: 0; top: 3px; width: 18px; height: 14px; border-left: 1px solid #888; pointer-events: none; }
.font-arrow::after { content: ""; position: absolute; left: 4px; top: 5px; border: 4px solid transparent; border-top-color: #000; }
.search { margin-left: auto; margin-right: -2px; display: flex; align-items: center; width: 147px; height: 21px; border: 1px solid #777; background: #fff; }
.search input { flex: 1; min-width: 0; height: 19px; padding-left: 2px; outline: 0; }
.vi-icon { width: 35px; border-left: 1px solid #000; padding: 6px 0 0 1px; background: #f0f0f0; }

/* diagram */
.workspace { flex: 1; min-height: 0; display: flex; position: relative; overflow: hidden; border-left: 2px solid #777; }
.diagram { position: absolute; left: 0; top: 0; shape-rendering: crispEdges; }
.label text { font-size: 12px; }
.t6 { font: 6px "Liberation Sans", sans-serif; }
.t7 { font: 7px "Liberation Sans", sans-serif; }
.t8 { font: 8px "Liberation Sans", sans-serif; }
.t9 { font: 9px "Liberation Sans", sans-serif; }
.t12 { font-size: 12px; }
.b { font-weight: bold; }
.o { fill: #ff8000; }
.g { fill: #008000; }
.red { fill: #c00; }
.blue { fill: #00f; }
.loop { fill: none; stroke: #808080; stroke-width: 6; }
.wf { fill: none; stroke: #930; stroke-width: 3; }
.wf-core { fill: none; stroke: #fff; stroke-dasharray: 2 2; }
.num, .num2 { fill: none; stroke: #ff8000; }
.num2 { stroke-width: 2; }
.int { fill: none; stroke: #00f; }
.bool { fill: none; stroke: #008000; stroke-dasharray: 1 1; }
.ink { fill: none; stroke-width: 1; }
.blue-ink { stroke: #00a2e8; }
.red-ink { stroke: #ed1c24; }
.passive { pointer-events: none; }
.enum, .const { display: block; width: 100%; height: 19px; border: 2px solid #00f; background: #fff; font-size: 12px; line-height: 15px; }
.enum { padding-left: 10px; }
.const { border-color: #ff8000; text-align: center; font-size: 11px; }
.const-int { border-color: #00f; }

/* scroll bars */
.up, .down, .left, .right { width: 0; height: 0; border: 4px solid transparent; flex: none; }
.up { border-top-width: 0; border-bottom-color: #444; }
.down { border-bottom-width: 0; border-top-color: #444; }
.left { border-left-width: 0; border-right-color: #444; }
.right { border-right-width: 0; border-left-color: #444; }
.vscroll { margin-left: auto; width: 18px; display: flex; flex-direction: column; align-items: center; padding: 7px 2px 6px 0; background: #eee; border-right: 2px solid #777; position: relative; }
.vthumb { width: 16px; flex: 634; margin-top: 146px; margin-bottom: 148px; border: 1px solid #999; background: repeating-linear-gradient(#777 0 1px, transparent 1px 3px) center / 8px 7px no-repeat, linear-gradient(90deg, #f6f6f6, #cfcfcf); }
.hscroll { flex: none; height: 17px; display: flex; align-items: center; background: #eee; border-left: 2px solid #777; border-right: 2px solid #777; padding-left: 6px; }
.track-a { flex: 339; }
.hthumb { flex: 1268; height: 15px; border: 1px solid #999; background: repeating-linear-gradient(90deg, #777 0 1px, transparent 1px 3px) center / 7px 8px no-repeat, linear-gradient(#f8f8f8, #cfcfcf); }
.track-b { flex: 274; }
.corner { margin-left: 6px; }
.grip { width: 17px; height: 15px; flex: none; background: radial-gradient(circle, #aaa 1px, transparent 1px) 0 0 / 4px 4px; clip-path: polygon(100% 20%, 100% 100%, 20% 100%); }

/* floating windows */
.float { position: absolute; background: linear-gradient(110deg, #fff 0, #f8f8f8 20%, #f0f0f0 38%, #fdfdfd 42%, #fff 60%, #f3f3f3 90%, #fff); border: 1px solid #666; box-shadow: 1px 2px 8px rgba(0, 0, 0, .6); padding: 0 7px 7px; }
.float header { height: 25px; display: flex; align-items: center; justify-content: space-between; padding-left: 2px; }
.x { width: 17px; height: 17px; margin-top: 5px; border: 1px solid #888; border-radius: 2px; background: #fff; display: flex; align-items: center; justify-content: center; }
.help-window { left: 201px; top: 829px; width: 617px; }
.help-body { border: 1px solid #333; background: #fff; }
.help-view { display: flex; height: 117px; }
.help-text { flex: 1; padding: 13px 0 0 12px; }
.help-text p { margin: 0 0 7px; white-space: nowrap; }
.help-text p svg { display: inline-block; vertical-align: -1px; margin-right: 1px; }
.help-text .indent { padding-left: 3px; }
.help-text .center { text-align: center; padding: 6px 15px 0 0; }
.help-text a { color: #00f; font-weight: bold; }
.muted { color: #888; }
.mini-v { width: 17px; background: #eee; display: flex; flex-direction: column; align-items: center; justify-content: space-between; padding: 8px 0; }
.help-foot { display: flex; align-items: center; height: 18px; background: #eee; padding-left: 1px; }
.help-foot button { width: 16px; height: 16px; border: 1px solid #000; background: #ddd; }
.help-foot .left { margin-left: 7px; }
.spring { flex: 1; }
.help-foot .right { margin-right: 7px; }
.tools-window { left: 1358px; top: 942px; width: 88px; }
.palette { display: grid; grid-template-columns: repeat(3, 1fr); gap: 1px; padding: 1px; background: #000; border: 1px solid #555; }
.palette button { height: 21px; background: #eee; overflow: hidden; }
.palette .auto { grid-column: 1 / 4; background: #808080; }
.palette .on { background: #808080; }
.serif { font: bold 18px "Liberation Serif", serif; }

/* task bar */
.taskbar { position: relative; flex: none; height: 40px; display: flex; align-items: center; gap: 4px; padding-left: 6px; background: linear-gradient(90deg, rgba(0,0,0,.55) 0, rgba(0,0,0,0) 10%, rgba(0,0,0,.1) 40%, rgba(0,0,0,0) 60%, rgba(0,0,0,.6) 65%, rgba(0,0,0,.5) 100%), linear-gradient(#aaa 0, #777 20%, #444 50%, #111 75%, #000 100%); }
.task { width: 58px; height: 38px; display: flex; align-items: center; justify-content: center; }
.start { width: 42px; margin-right: 8px; }
.open { border: 1px solid #aaa; border-radius: 3px; background: linear-gradient(160deg, rgba(255,255,255,.45), rgba(255,255,255,.08) 60%); }
.active { width: 50px; background: linear-gradient(160deg, #ddd, #777); box-shadow: 3px 0 0 -1px #333, 5px 0 0 -1px #999; }
.word { font: bold 14px "Liberation Serif", serif; fill: #fff; }
.skype { font: bold 24px "Liberation Sans", sans-serif; fill: #fff; }
.reflection { position: absolute; left: 1362px; top: 0; width: 80px; height: 40px; filter: blur(4px); background: radial-gradient(circle at 18px 8px, #b44 0 6px, transparent 8px), radial-gradient(circle at 42px 6px, #994 0 6px, transparent 8px), linear-gradient(90deg, transparent 28px, #666 29px 33px, transparent 34px), #ccc; }
.tray { margin-left: auto; display: flex; align-items: center; color: #fff; height: 100%; }
.clock { width: 70px; margin: 0 6px 0 2px; display: flex; flex-direction: column; align-items: center; line-height: 17px; }
.show-desktop { width: 14px; height: 38px; margin-right: 1px; border: 1px solid #666; background: linear-gradient(#777, #222); }
.tray > svg { margin-right: 12px; }
```
